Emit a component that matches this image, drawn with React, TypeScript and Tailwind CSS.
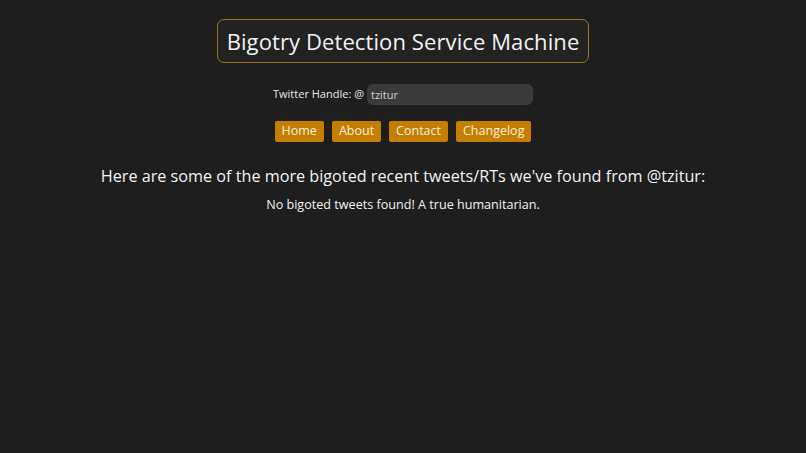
export default function App() {
  return (
    <div
      className="flex min-h-[453px] w-full flex-col items-center bg-[#1e1e1e] text-[#f2f2f2]"
      style={{ fontFamily: '"Open Sans", "Noto Sans", sans-serif' }}
    >
      <div className="mt-[19px] flex h-[44px] items-center rounded-[7px] border border-[#9a7420] bg-[#222222] px-[9px]">
        <h1 className="text-[22px] font-medium leading-none tracking-[0.1px]">Bigotry Detection Service Machine</h1>
      </div>

      <div className="mt-[21px] flex items-center gap-[3px]">
        <label className="text-[11px] font-medium text-[#e6e6e6]">Twitter Handle: @</label>
        <input
          defaultValue="tzitur"
          className="h-[21px] w-[166px] rounded-[6px] bg-[#3a3a3a] px-[4px] text-[11px] text-[#cfcfcf] outline-none"
        />
      </div>

      <nav className="mt-[16px] flex gap-[8px]">
        {["Home", "About", "Contact", "Changelog"].map((l) => (
          <a
            key={l}
            className="flex h-[21px] items-center rounded-[2px] bg-[#c47f00] px-[7px] text-[12.5px] text-[#fbeede]"
          >
            {l}
          </a>
        ))}
      </nav>

      <h2 className="mt-[22px] text-[16.2px] font-medium leading-[24px]">
        Here are some of the more bigoted recent tweets/RTs we've found from @tzitur:
      </h2>
      <p className="mt-[8px] text-[12.6px] font-medium leading-[18px]">No bigoted tweets found! A true humanitarian.</p>
    </div>
  );
}
